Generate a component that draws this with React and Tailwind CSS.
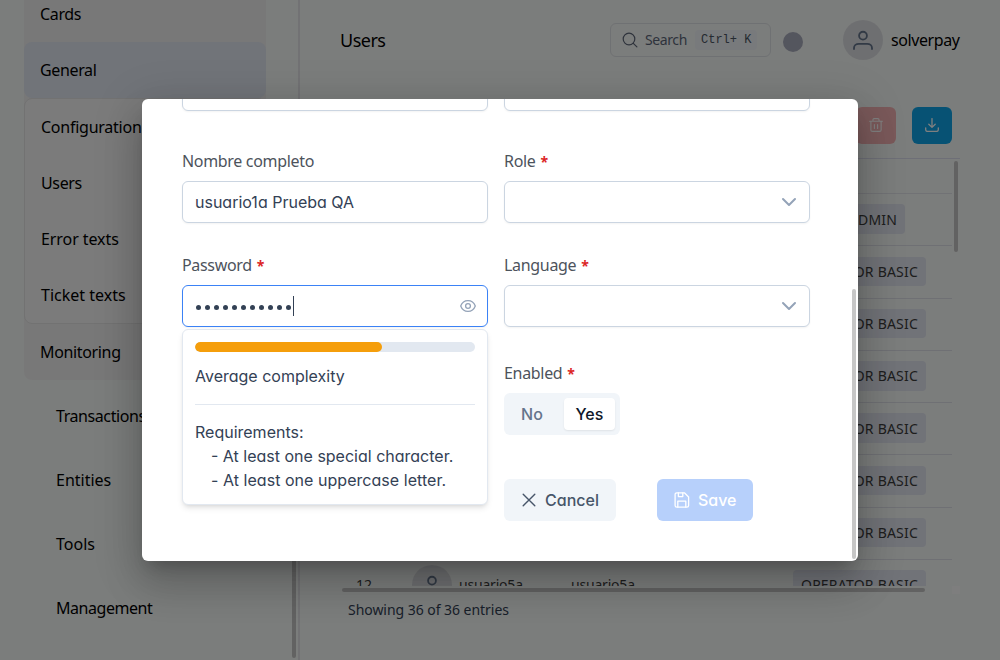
import React from "react";

const ubuntu = "font-['Noto_Sans',sans-serif]";
const inter = "font-['Inter',sans-serif] [font-feature-settings:'cv11']";

function Stroke({ children, className = "", width = 1.5, box = "0 0 24 24" }) {
  return (
    <svg viewBox={box} fill="none" stroke="currentColor" strokeWidth={width} strokeLinecap="round" strokeLinejoin="round" className={"shrink-0 " + className}>
      {children}
    </svg>
  );
}

function UserIcon({ className }) {
  return (
    <Stroke className={className} width={2.2}>
      <circle cx="12" cy="6.8" r="4.7" />
      <path d="M1.2 22.8v-1.2c0-3 2.6-5 5.8-5h10c3.2 0 5.8 2 5.8 5v1.2" />
    </Stroke>
  );
}

function ChevronDown() {
  return (
    <Stroke className="h-4 w-4 text-[#94a3b8]" width={2} box="0 0 16 16">
      <path d="M2 5l6 6 6-6" />
    </Stroke>
  );
}

const submenu = [
  { text: "Configuration", track: "tracking-[-0.25px]" },
  { text: "Users", track: "tracking-[-0.35px]" },
  { text: "Error texts", track: "tracking-[-0.08px]" },
  { text: "Ticket texts", track: "tracking-[0px]" },
];

const sections = [
  { text: "Transactions", track: "tracking-[-0.42px]" },
  { text: "Entities", track: "tracking-[0px]" },
  { text: "Tools", track: "tracking-[0px]" },
  { text: "Management", track: "tracking-[-0.45px]" },
];

function Sidebar() {
  return (
    <aside className="relative flex h-[660px] w-[300px] shrink-0 flex-col overflow-hidden border-r-2 border-[#e4e5e8] pl-6">
      <nav className="-mt-3.5 w-[242px] shrink-0 rounded-lg bg-[#f1f1f1]">
        <div className="flex h-14 items-center pl-4"><span className="tracking-[-0.35px]">Cards</span></div>
        <div className="flex h-14 items-center rounded-lg bg-[#e2e8f2] pl-4"><span className="tracking-[-0.35px]">General</span></div>
        <div className="rounded-lg border border-[#e4e4e4] bg-[#f6f6f6]">
          {submenu.map((s) => (
            <div key={s.text} className="flex h-14 items-center pl-4"><span className={s.track}>{s.text}</span></div>
          ))}
        </div>
        <div className="flex h-14 items-center pl-4"><span className="tracking-[-0.35px]">Monitoring</span></div>
      </nav>
      <nav className="mt-1 pl-8">
        {sections.map((s) => (
          <div key={s.text} className="flex h-16 items-center"><span className={s.track}>{s.text}</span></div>
        ))}
      </nav>
      <div className="absolute right-[2px] top-[400px] h-[258px] w-1 rounded-full bg-[#c4c4c4]" />
    </aside>
  );
}

function Header() {
  return (
    <header className="flex h-20 items-center pl-10 pr-10">
      <h1 className="text-[18px] tracking-[-0.5px]">Users</h1>
      <div className="ml-auto flex h-[34px] w-[161px] items-center rounded-md border border-[#dfe3e6] pl-[11px] text-[#5d6778]">
        <Stroke className="h-4 w-4" width={1.2} box="0 0 16 16">
          <circle cx="7" cy="7" r="5.8" />
          <path d="M11.3 11.3l3.6 3.6" />
        </Stroke>
        <span className="-mt-px ml-[7px] w-[43px] whitespace-nowrap text-[14px] tracking-[-0.4px]">Search</span>
        <span className="ml-[7px] flex h-5 items-center whitespace-pre rounded bg-[#f1f4f8] px-1.5 font-['Liberation_Mono',monospace] text-[12px] text-[#4b5563]">Ctrl+ K</span>
      </div>
      <div className="ml-3 mt-1 h-5 w-5 rounded-full bg-[#a9acbd]" />
      <div className="ml-10 flex h-10 w-10 items-center justify-center rounded-full bg-[#dddfe3] text-[#64748b]">
        <UserIcon className="h-5 w-5" />
      </div>
      <span className="ml-2 w-[69px] whitespace-nowrap tracking-[-0.4px]">solverpay</span>
    </header>
  );
}

function Tag({ children }) {
  return <span className="-mt-px flex h-[29.5px] items-center rounded bg-[#e2e6f0] px-2 text-[14px] tracking-[0.22px] text-[#3d3d3d]">{children}</span>;
}

const roles = ["SUPER ADMIN", "OPERATOR BASIC", "OPERATOR BASIC", "OPERATOR BASIC", "OPERATOR BASIC", "OPERATOR BASIC", "OPERATOR BASIC"];

function UsersTable() {
  return (
    <section className="relative ml-10 mr-10 mt-[14px] h-[436px] border-t border-[#dddfee]">
      <div className="mr-2 h-[427px] overflow-hidden">
        <div className="h-[35px] border-b border-[#e2e4ea]" />
        {roles.map((r, i) => (
          <div key={i} className="flex h-[52.25px] items-center border-b border-[#dfe1e9] pl-[453px]">
            <Tag>{r}</Tag>
          </div>
        ))}
        <div className="-mt-px flex h-[52px] items-center text-[14px] text-[#3d3d3d]">
          <span className="w-[72px] pl-4">12</span>
          <span className="flex h-10 w-10 items-center justify-center rounded-full bg-[#dddfe3] text-[#64748b]">
            <UserIcon className="h-5 w-5" />
          </span>
          <span className="ml-[7px] w-[112px] tracking-[-0.2px]">usuario5a</span>
          <span className="w-[222px] tracking-[-0.2px]">usuario5a</span>
          <Tag>OPERATOR BASIC</Tag>
        </div>
      </div>
      <div className="absolute right-[2px] top-[2px] h-[91px] w-1 rounded-full bg-[#c4c4c4]" />
      <div className="absolute left-[2px] top-[429px] h-1 w-[583px] rounded-full bg-[#c4c4c4]" />
      <div className="absolute right-0 top-[427px] h-2 w-2 bg-[#fdfdfd]" />
    </section>
  );
}

function Label({ children, required }) {
  return (
    <div className={ubuntu + " flex h-6 items-center gap-[5px] text-[16px] text-[#4d535c]"}>
      <span className="tracking-[-0.32px]">{children}</span>
      {required && <span className="mt-px text-[14px] font-bold text-[#dc2626]">*</span>}
    </div>
  );
}

const field = "flex h-[42px] w-full items-center rounded-md border bg-white px-3 shadow-[0_1px_2px_rgba(18,18,23,0.05)]";

function Dialog() {
  return (
    <div className="relative h-[462px] w-[716px] overflow-hidden rounded-md bg-white px-10 shadow-[0_11px_15px_-7px_rgba(0,0,0,0.2),0_24px_38px_3px_rgba(0,0,0,0.14),0_9px_46px_8px_rgba(0,0,0,0.12)]">
      <div className="-mt-[30px] grid w-[628px] grid-cols-2 gap-x-4">
        <div className={field + " border-[#cbd5e1]"} />
        <div className={field + " border-[#cbd5e1]"} />
        <div className="mt-[38px] flex flex-col gap-2">
          <Label>Nombre completo</Label>
          <div className={field + " border-[#cbd5e1]"}><span>usuario1a Prueba QA</span></div>
        </div>
        <div className="mt-[38px] flex flex-col gap-2">
          <Label required>Role</Label>
          <div className={field + " justify-end border-[#cbd5e1]"}><ChevronDown /></div>
        </div>
        <div className="relative mt-[30px] flex flex-col gap-2">
          <Label required>Password</Label>
          <div className={field + " border-[#3b82f6]"}>
            <div className="mt-0.5 flex gap-1 pl-px">
              {Array.from({ length: 11 }, (_, i) => (
                <span key={i} className="h-[5px] w-[5px] rounded-full bg-[#334155]" />
              ))}
            </div>
            <span className="ml-[2px] h-5 w-px bg-[#334155]" />
            <Stroke className="ml-auto mr-[-1px] h-4 w-4 text-[#94a3b8]" width={1.3} box="0 0 16 16">
              <path d="M0.7 8C1.9 4.8 4.6 2.6 8 2.6S14.1 4.8 15.3 8C14.1 11.2 11.4 13.4 8 13.4S1.9 11.2 0.7 8z" />
              <circle cx="8" cy="8" r="2.4" />
            </Stroke>
          </div>
          <div className="absolute left-0 top-[76px] h-[176px] w-[306px] rounded-md border border-[#e2e8f0] bg-white p-3 leading-6 shadow-[0_4px_6px_-1px_rgba(0,0,0,0.1),0_2px_4px_-2px_rgba(0,0,0,0.1)]">
            <div className="h-[10px] overflow-hidden rounded-md bg-[#e2e8f0]">
              <div className="h-full w-[187px] rounded-md bg-[#f59e0b]" />
            </div>
            <div className="mt-3">Average complexity</div>
            <div className="mb-[15px] mt-4 h-px bg-[#e2e8f0]" />
            <div>Requirements:</div>
            <div className="pl-4">- At least one special character.</div>
            <div className="pl-4 tracking-[0.04px]">- At least one uppercase letter.</div>
          </div>
        </div>
        <div className="mt-[30px] flex flex-col gap-2">
          <Label required>Language</Label>
          <div className={field + " justify-end border-[#cbd5e1]"}><ChevronDown /></div>
        </div>
        <div className="col-start-2 mt-[34px] flex flex-col gap-2">
          <Label required>Enabled</Label>
          <div className="flex h-[42px] w-[116px] items-center rounded-md bg-[#f1f5f9] p-1 font-medium">
            <span className="mr-2 w-[48px] text-center text-[#64748b]">No</span>
            <span className="flex h-8 w-[51px] items-center justify-center rounded bg-white text-[#0f172a] shadow-[0_1px_2px_rgba(0,0,0,0.08)]">Yes</span>
          </div>
        </div>
        <div className="col-start-2 mt-11 flex gap-[41px] font-medium">
          <div className="flex h-[42px] w-28 items-center rounded-md bg-[#f1f5f9] pl-[17px] text-[#475569]">
            <Stroke className="h-4 w-4" width={1.4} box="0 0 16 16">
              <path d="M2.2 2.2l11.6 11.6M13.8 2.2L2.2 13.8" />
            </Stroke>
            <span className="ml-2">Cancel</span>
          </div>
          <div className="flex h-[42px] w-24 items-center rounded-md bg-[#b7d0fb] pl-[17px] text-white">
            <Stroke className="h-4 w-4" width={1.3} box="0 0 16 16">
              <path d="M2.8 0.8h7.6l4.2 4.2v8.4a1.7 1.7 0 0 1-1.7 1.7H2.8a1.7 1.7 0 0 1-1.7-1.7V2.5A1.7 1.7 0 0 1 2.8 0.8z" />
              <path d="M4.4 1v3.6h4.4V1M3.8 15V9.2h8V15" />
            </Stroke>
            <span className="ml-2">Save</span>
          </div>
        </div>
      </div>
      <div className="absolute right-[2px] top-[190px] h-[270px] w-1 rounded-full bg-[#c6c6c6]" />
    </div>
  );
}

export default function App() {
  return (
    <div className={ubuntu + " relative h-[660px] w-[1000px] overflow-hidden bg-[#f7faf8] text-[16px] text-black"}>
      <div className="flex">
        <Sidebar />
        <main className="flex w-[700px] flex-col">
          <Header />
          <div className="mt-[27px] flex justify-end gap-4 pr-12">
            <div className="flex h-[37px] w-10 items-center justify-center rounded-md bg-[#f5b3b4] pb-px text-white">
              <Stroke className="h-[14px] w-[14px]" width={1.1} box="0 0 14 14">
                <path d="M0.6 3.3h12.8M4 3.1V1.7c0-.7.5-1.1 1.1-1.1h3.8c.6 0 1.1.4 1.1 1.1v1.4M1.9 3.5v8.4c0 .9.6 1.5 1.5 1.5h7.2c.9 0 1.5-.6 1.5-1.5V3.5M5.4 6.5v4M8.6 6.5v4" />
              </Stroke>
            </div>
            <div className="flex h-[37px] w-10 items-center justify-center rounded-md bg-[#0ea5e9] pb-px text-white">
              <Stroke className="h-[14px] w-[14px]" width={1.3} box="0 0 14 14">
                <path d="M7 0.6v8.6M3.8 6.2L7 9.4l3.2-3.2M0.7 9.8v1.9c0 1 .7 1.7 1.7 1.7h9.2c1 0 1.7-.7 1.7-1.7V9.8" />
              </Stroke>
            </div>
          </div>
          <UsersTable />
          <p className="ml-12 mt-[6px] text-[14px] leading-5 tracking-[-0.04px] text-[#334155]">Showing 36 of 36 entries</p>
        </main>
      </div>
      <div className={inter + " absolute inset-0 flex items-center justify-center bg-black/50 text-[#334155]"}>
        <Dialog />
      </div>
    </div>
  );
}
